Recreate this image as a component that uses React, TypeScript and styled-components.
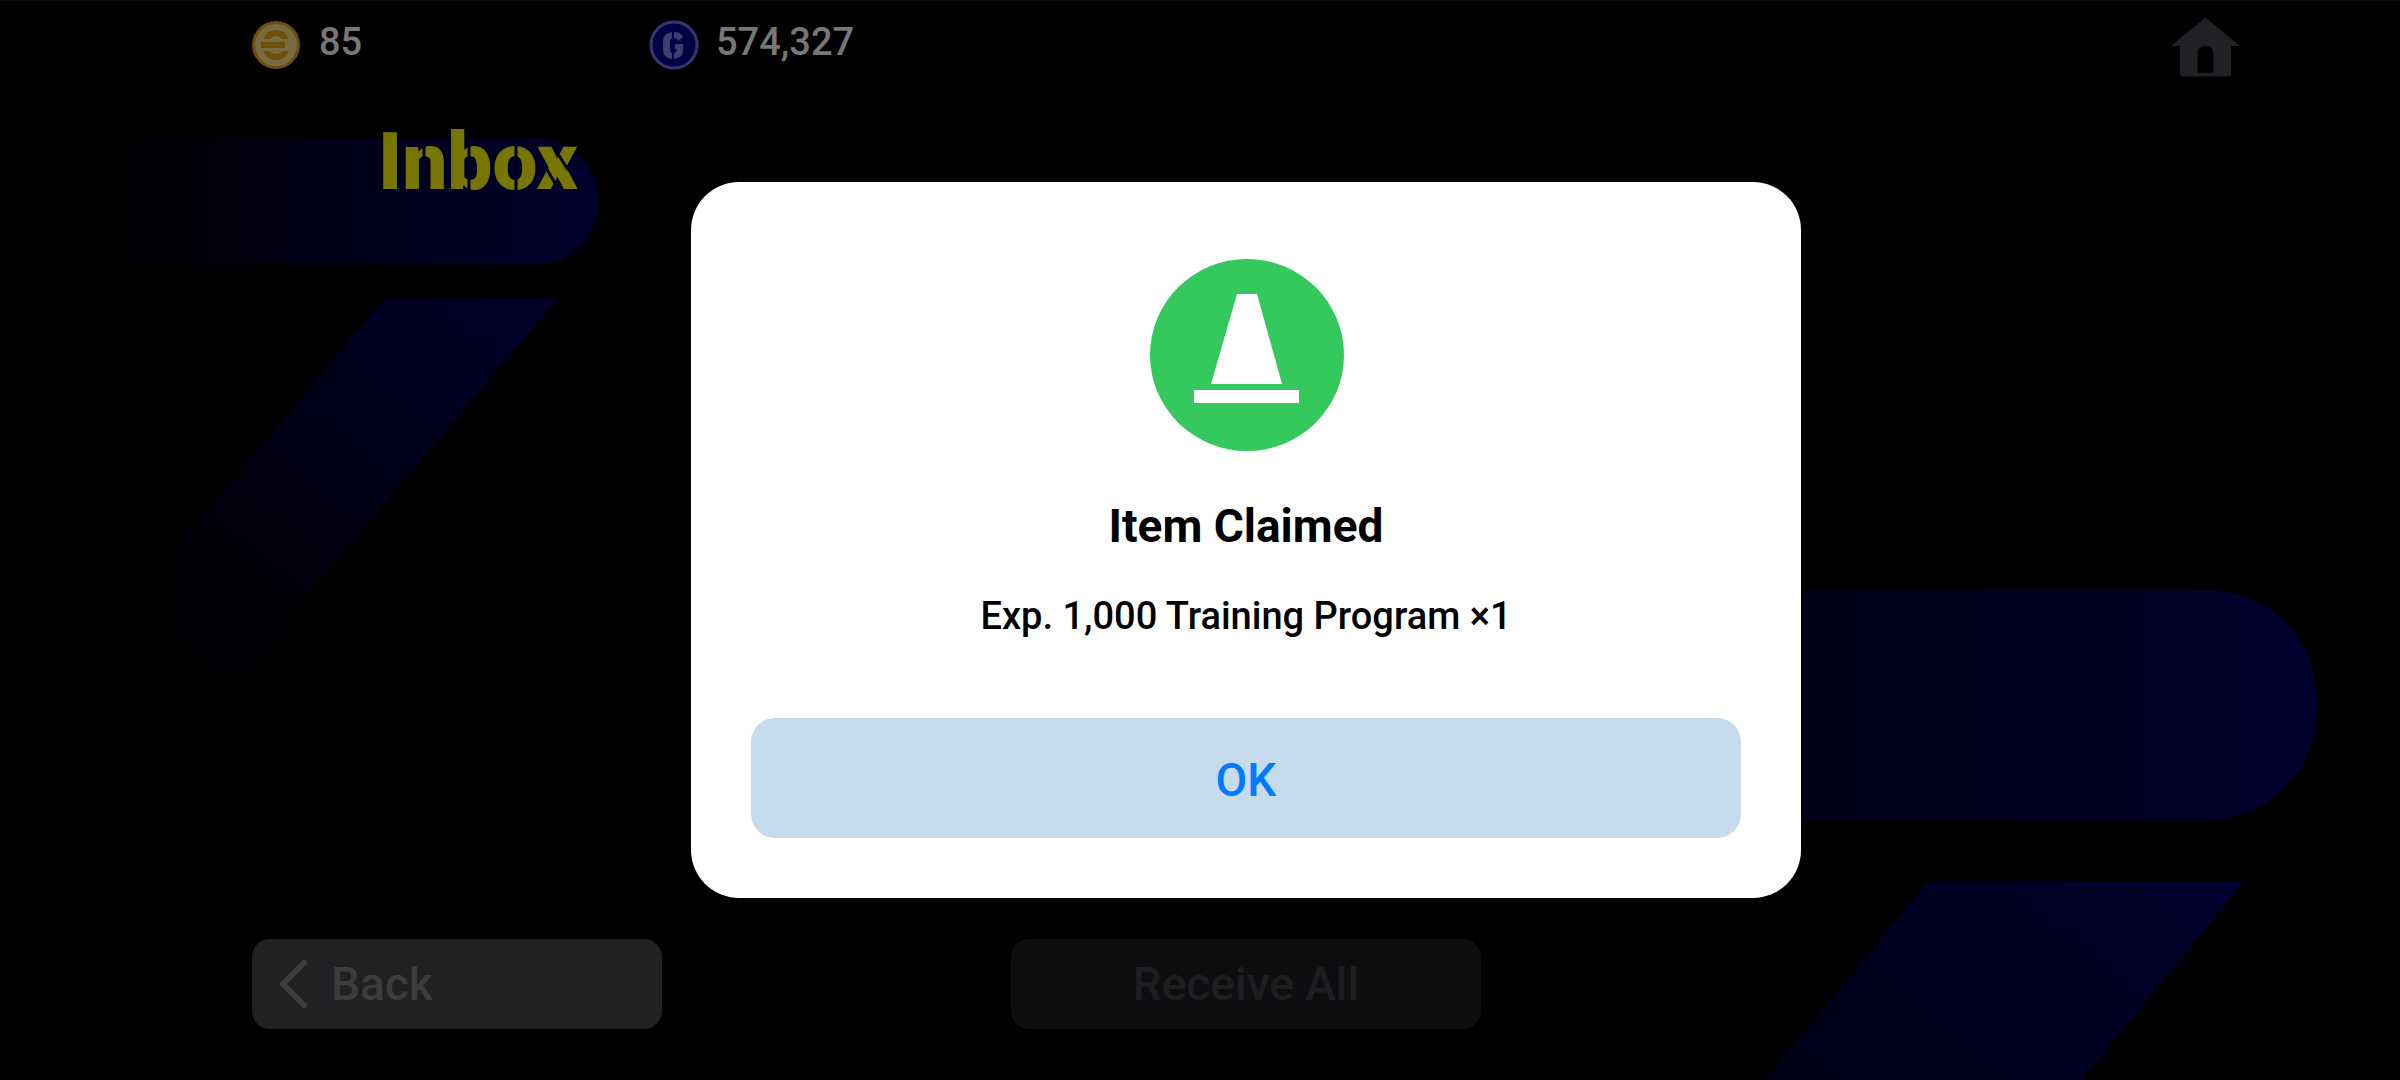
import React from "react";
import styled, { createGlobalStyle } from "styled-components";

const GlobalStyle = createGlobalStyle`
  *, *::before, *::after { box-sizing: border-box; }
  body {
    margin: 0;
    background: #000;
    font-family: Roboto, "Open Sans", "Liberation Sans", sans-serif;
  }
  h1, h2, p { margin: 0; }
  button { font-family: inherit; cursor: pointer; }
`;

const Screen = styled.main`
  position: relative;
  display: flex;
  flex-direction: column;
  min-height: 100vh;
  padding: 0 160px 51px 252px;
  overflow: hidden;
  background: #000;
  border-top: 1px solid #0a0a0b;
`;

const Backdrop = styled.svg`
  position: absolute;
  inset: 0;
  width: 100%;
  height: 100%;
`;

const TopBar = styled.header`
  position: relative;
  display: flex;
  align-items: flex-start;
  padding-top: 16px;
`;

const Currency = styled.div`
  display: flex;
  gap: 17px;
  min-width: 397px;
  padding-top: 3px;
`;

const CoinIcon = styled.svg`
  width: 50px;
  height: 50px;
`;

const Amount = styled.span`
  font-size: 38px;
  line-height: 44px;
  font-weight: 500;
  color: #777;
`;

const HomeButton = styled.button`
  display: flex;
  margin-left: auto;
  padding: 0;
  border: 0;
  background: none;
`;

const TitleRow = styled.div`
  position: relative;
  display: flex;
  padding: 39px 0 0 126px;
`;

const Title = styled.h1`
  position: relative;
  font-size: 80px;
  line-height: 92px;
  font-weight: 900;
  color: #777700;
`;

const StencilCuts = styled.svg`
  position: absolute;
  left: 0;
  top: 0;
  width: 210px;
  height: 92px;
`;

const Footer = styled.footer`
  position: relative;
  display: grid;
  grid-template-columns: 1fr auto 1fr;
  margin-top: auto;
`;

const FooterButton = styled.button<{ $width: number; $align?: string }>`
  display: flex;
  align-items: center;
  justify-content: ${(p) => p.$align ?? "center"};
  gap: 24px;
  width: ${(p) => p.$width}px;
  height: 90px;
  padding: 0 28px;
  border: 0;
  border-radius: 18px;
  background: #212123;
  color: #3c3c3d;
  font-size: 46px;
  line-height: 56px;
  font-weight: 500;

  &:disabled {
    background: #0e0e10;
    color: #1e1e20;
  }
`;

const Overlay = styled.div`
  position: fixed;
  inset: 0;
  display: flex;
  align-items: center;
  justify-content: center;
  padding-left: 92px;
`;

const Dialog = styled.section`
  display: flex;
  flex-direction: column;
  align-items: center;
  width: 100%;
  max-width: 1110px;
  padding: 77px 60px 60px;
  border-radius: 48px;
  background: #fff;
  color: #000;
  text-align: center;
`;

const DialogTitle = styled.h2`
  margin-top: 46px;
  font-size: 46px;
  line-height: 56px;
  font-weight: 700;
`;

const DialogText = styled.p`
  margin-top: 38px;
  font-size: 38px;
  line-height: 48px;
  font-weight: 500;
`;

const OkButton = styled.button`
  width: 100%;
  height: 120px;
  margin-top: 78px;
  padding: 4px 0 0;
  border: 0;
  border-radius: 24px;
  background: #c7dbef;
  color: #007aff;
  font-size: 46px;
  line-height: 56px;
  font-weight: 500;
`;

function BackgroundArt() {
  return (
    <Backdrop viewBox="0 0 2400 1080" preserveAspectRatio="xMidYMid slice" aria-hidden="true">
      <defs>
        <linearGradient id="barFade">
          <stop offset="0" stopColor="#000006" />
          <stop offset="1" stopColor="#00002d" />
        </linearGradient>
        <linearGradient id="legLeft" gradientUnits="userSpaceOnUse" x1="530" y1="300" x2="190" y2="700">
          <stop offset="0" stopColor="#00002a" />
          <stop offset="1" stopColor="#000000" />
        </linearGradient>
        <linearGradient id="legRight" gradientUnits="userSpaceOnUse" x1="2200" y1="882" x2="1660" y2="1518">
          <stop offset="0" stopColor="#00002c" />
          <stop offset="1" stopColor="#000000" />
        </linearGradient>
      </defs>
      <path d="M125 138H535C574 138 598 166 598 201S574 264 535 264H125Z" fill="url(#barFade)" />
      <path d="M384 298H558L204 716L175 750V549Z" fill="url(#legLeft)" />
      <path d="M1450 589H2202C2273 589 2317 640 2317 704S2273 820 2202 820H1450Z" fill="url(#barFade)" />
      <path d="M1928 881H2244L2082 1080H1764Z" fill="url(#legRight)" />
    </Backdrop>
  );
}

function GoldCoin() {
  return (
    <CoinIcon viewBox="0 0 50 50" aria-hidden="true">
      <circle cx="24" cy="25" r="24" fill="#6c4d0c" />
      <circle cx="24" cy="25" r="21" fill="#776b3f" />
      <g fill="#6e500b">
        <path d="M11 19Q15 10 24 10T37 19H30Q28 16 24 16T18 19Z" />
        <path d="M9 22H33V28H9Z" />
        <path d="M11 31Q15 40 24 40T37 31H30Q28 34 24 34T18 31Z" />
      </g>
    </CoinIcon>
  );
}

function BlueCoin() {
  return (
    <CoinIcon viewBox="0 0 50 50" aria-hidden="true">
      <circle cx="25" cy="25" r="23" fill="#000044" stroke="#373570" strokeWidth="3" />
      <g fill="#3f3d70">
        <path d="M23 12V18Q21 19 21 22V29Q21 32 23 33V39Q14 38 14 30V21Q14 13 23 12Z" />
        <path d="M25 12Q32 12 34 17L29 21Q28 18 25 18Z" />
        <path d="M26 24H34V30Q34 38 25 39V33Q28 32 28 29H26Z" />
      </g>
    </CoinIcon>
  );
}

export default function App() {
  return (
    <>
      <GlobalStyle />
      <Screen>
        <BackgroundArt />
        <TopBar>
          <Currency>
            <GoldCoin />
            <Amount>85</Amount>
          </Currency>
          <Currency>
            <BlueCoin />
            <Amount>574,327</Amount>
          </Currency>
          <HomeButton aria-label="Home">
            <svg width="69" height="60" viewBox="0 0 70 60" aria-hidden="true">
              <path
                d="M35 0L70 29H61V57Q61 60 58 60H12Q9 60 9 57V29H0ZM27 56H43V36Q43 29 35 29T27 36Z"
                fill="#202124"
                fillRule="evenodd"
              />
            </svg>
          </HomeButton>
        </TopBar>
        <TitleRow>
          <Title>
            Inbox
            <StencilCuts viewBox="0 0 210 92" aria-hidden="true">
              <g fill="none" stroke="#00001e" strokeWidth="3">
                <path d="M46 28V76" />
                <path d="M91 28V76" />
                <path d="M138 28V76" />
                <path d="M175 30L190 54" />
                <path d="M167 50L182 76" />
              </g>
            </StencilCuts>
          </Title>
        </TitleRow>
        <Footer>
          <FooterButton $width={410} $align="flex-start">
            <svg width="27" height="48" viewBox="0 0 27 48" aria-hidden="true">
              <path
                d="M24 3L3 24L24 45"
                fill="none"
                stroke="currentColor"
                strokeWidth="6"
                strokeLinecap="round"
                strokeLinejoin="round"
              />
            </svg>
            Back
          </FooterButton>
          <FooterButton $width={470} disabled>
            Receive All
          </FooterButton>
        </Footer>
      </Screen>
      <Overlay>
        <Dialog role="dialog" aria-modal="true" aria-labelledby="claimed-title">
          <svg width="195" height="193" viewBox="0 0 195 193" aria-hidden="true">
            <ellipse cx="98" cy="96" rx="97" ry="96" fill="#35c95d" />
            <path d="M88 35H108L133 125H62Z" fill="#fff" />
            <path d="M45 131H150V144H45Z" fill="#fff" />
          </svg>
          <DialogTitle id="claimed-title">Item Claimed</DialogTitle>
          <DialogText>Exp. 1,000 Training Program ×1</DialogText>
          <OkButton>OK</OkButton>
        </Dialog>
      </Overlay>
    </>
  );
}
